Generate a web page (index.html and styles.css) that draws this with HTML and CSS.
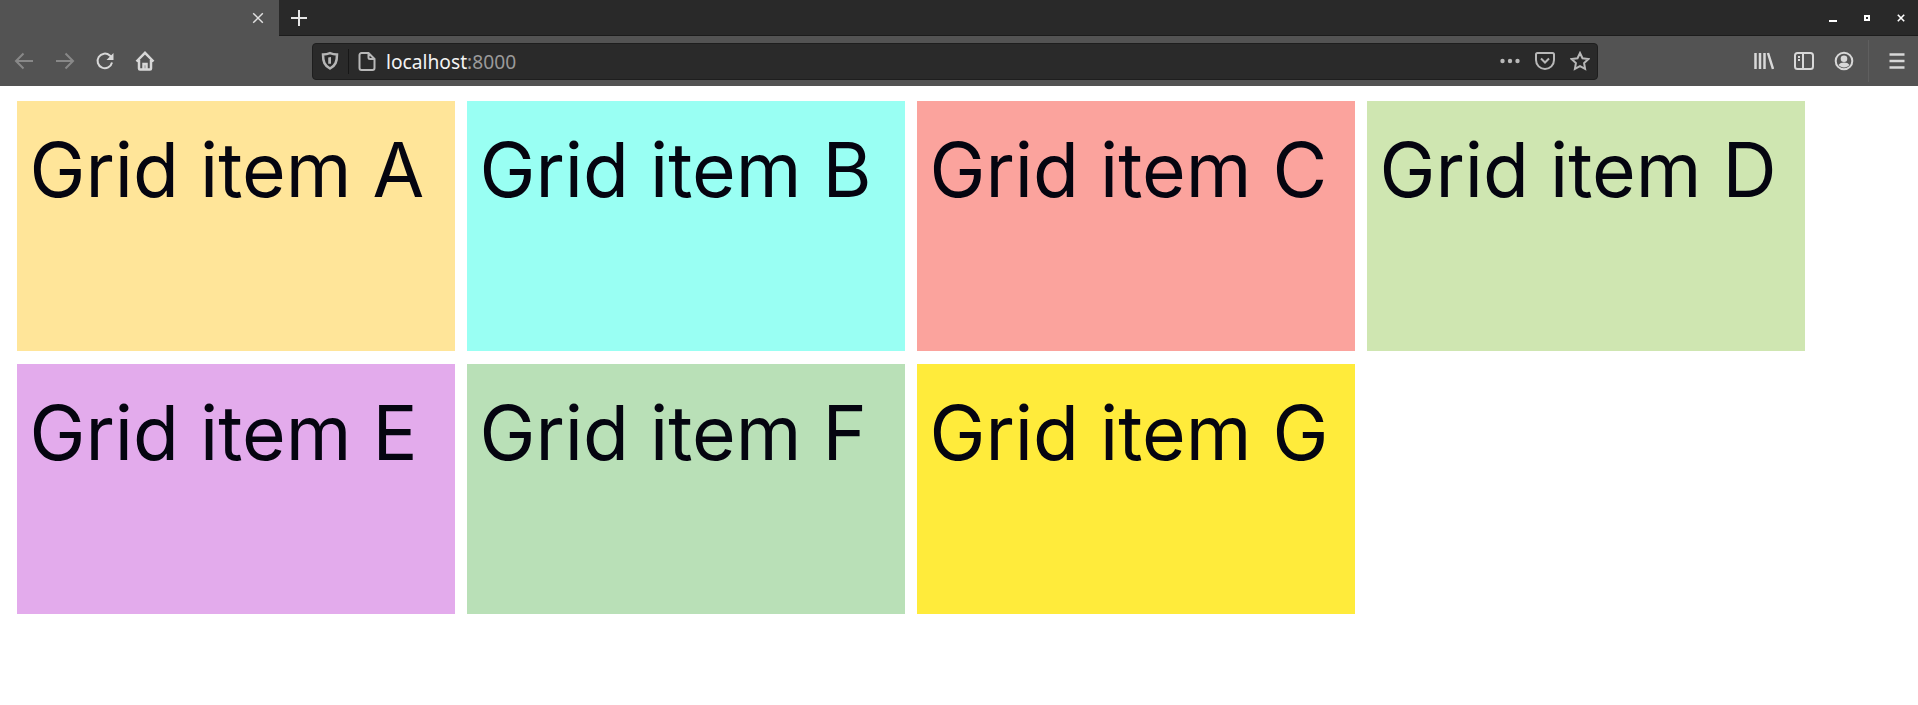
FILE: index.html
```html
<!DOCTYPE html>
<html lang="en">

<head>
    <meta charset="UTF-8">
    <title>Grid items</title>
    <link rel="stylesheet" href="styles.css">
</head>

<body>
    <header class="browser">
        <div class="tabbar">
            <div class="tab">
                <svg class="tab-close" viewBox="0 0 20 20"><path d="M4 4l12 12M16 4L4 16"/></svg>
            </div>
            <svg class="new-tab" viewBox="0 0 20 20"><path d="M10 2v16M2 10h16"/></svg>
            <div class="window-controls">
                <span class="win-min"></span>
                <span class="win-max"></span>
                <svg class="win-close" viewBox="0 0 10 10"><path d="M1 1l8 8M9 1l-8 8"/></svg>
            </div>
        </div>
        <div class="toolbar">
            <div class="nav">
                <svg class="icon dim" viewBox="0 0 20 20"><path d="M19 10H2M9.500 2.500L2 10l7.500 7.500"/></svg>
                <svg class="icon dim" viewBox="0 0 20 20"><path d="M1 10h17M10.500 2.500L18 10l-7.500 7.500"/></svg>
                <svg class="icon" viewBox="0 0 20 20"><path d="M17 11.500A7.300 7.300 0 1 1 14.800 4.500L17 6.500"/><path class="solid" d="M18.500 2v7h-7z"/></svg>
                <svg class="icon bold" viewBox="0 0 20 20"><path d="M1.500 10.500L10 1.800l8.500 8.700M4 9v8.500a1 1 0 0 0 1 1h10a1 1 0 0 0 1-1V9"/><path d="M8.500 18v-5h3v5"/></svg>
            </div>
            <div class="urlbar">
                <svg class="icon shield bold" viewBox="0 0 20 20"><path d="M10 2.200c2.500 1 4.500 1.300 7 1.300 0 7.300-1.500 11-7 14-5.500-3-7-6.700-7-14 2.500 0 4.500-.3 7-1.300z"/><path class="solid thin" d="M8.200 6.500l2.800-.6v6.800H8.200z"/></svg>
                <span class="url-sep"></span>
                <svg class="icon grey" viewBox="0 0 20 20"><path d="M11.500 2H4.500A2 2 0 0 0 2.500 4v13a2 2 0 0 0 2 2h11a2 2 0 0 0 2-2V8zM11.500 2v4.500a1.500 1.500 0 0 0 1.500 1.500h4.500"/></svg>
                <p class="url">localhost<span class="port">:8000</span></p>
                <div class="url-actions">
                    <svg class="icon grey" viewBox="0 0 20 20"><circle class="solid" cx="2.500" cy="10" r="2.200"/><circle class="solid" cx="10" cy="10" r="2.200"/><circle class="solid" cx="17.500" cy="10" r="2.200"/></svg>
                    <svg class="icon grey" viewBox="0 0 20 20"><path d="M2.500 2h15A1.500 1.500 0 0 1 19 3.500V9a9 9 0 0 1-18 0V3.500A1.500 1.500 0 0 1 2.500 2z"/><path d="M6 7.500l4 4 4-4"/></svg>
                    <svg class="icon grey" viewBox="0 0 20 20"><path d="M10 2l2.500 5.300 5.900.8-4.300 4 1 5.800-5.100-2.800-5.100 2.800 1-5.800-4.300-4 5.900-.8z"/></svg>
                </div>
            </div>
            <div class="tools">
                <svg class="icon bold" viewBox="0 0 20 20"><path d="M1.500 2v16M6 2v16M10.500 2v16M14 2l5 16"/></svg>
                <svg class="icon" viewBox="0 0 20 20"><rect x="1" y="2" width="18" height="16" rx="2.500"/><path d="M9 2v16M4 6h2M4 9h2"/></svg>
                <svg class="icon" viewBox="0 0 20 20"><circle cx="10" cy="10" r="8.300"/><circle class="solid" cx="10" cy="7.800" r="3.300"/><path class="solid" d="M4.500 14c1.200-1.700 3-2.500 5.500-2.500s4.300.8 5.500 2.500c-1.400 1.600-3.300 2.400-5.500 2.400S5.900 15.600 4.500 14z"/></svg>
            </div>
            <span class="tool-sep"></span>
            <svg class="icon menu bold" viewBox="0 0 20 20"><path d="M2.500 3.500h15M2.500 10h15M2.500 16.500h15"/></svg>
        </div>
    </header>

    <main class="grid">
        <div class="grid-item item-a">Grid item A</div>
        <div class="grid-item item-b">Grid item B</div>
        <div class="grid-item item-c">Grid item C</div>
        <div class="grid-item item-d">Grid item D</div>
        <div class="grid-item item-e">Grid item E</div>
        <div class="grid-item item-f">Grid item F</div>
        <div class="grid-item item-g">Grid item G</div>
    </main>
</body>

</html>
```

FILE: styles.css
```css
body {
    margin: 0;
    background-color: #fff;
    font-family: Inter, sans-serif;
}

/* browser chrome */
.tabbar {
    display: flex;
    align-items: center;
    height: 35px;
    background-color: #292929;
    border-bottom: 1px solid #1c1c1c;
}
.tab {
    display: flex;
    align-items: center;
    justify-content: flex-end;
    box-sizing: border-box;
    width: 279px;
    height: 36px;
    margin-bottom: -1px;
    padding-right: 13px;
    background-color: #535353;
}
.tab-close {
    width: 16px;
    height: 16px;
    fill: none;
    stroke: #e0e0e0;
    stroke-width: 1.800;
}
.new-tab {
    width: 20px;
    height: 20px;
    margin-left: 10px;
    fill: none;
    stroke: #e6e6e6;
    stroke-width: 2;
}
.window-controls {
    display: flex;
    align-items: center;
    gap: 27px;
    margin-left: auto;
    padding-right: 13px;
}
.win-min {
    width: 8px;
    height: 2px;
    margin-top: 6px;
    background-color: #fff;
}
.win-max {
    box-sizing: border-box;
    width: 6px;
    height: 6px;
    border: 2px solid #fff;
}
.win-close {
    width: 8px;
    height: 8px;
    fill: none;
    stroke: #fff;
    stroke-width: 2;
}

.toolbar {
    display: flex;
    align-items: center;
    height: 50px;
    background-color: #535353;
}
.icon {
    flex: none;
    width: 20px;
    height: 20px;
    fill: none;
    stroke: #d8d8d8;
    stroke-width: 2;
}
.icon.bold {
    stroke-width: 2.500;
}
.icon.dim {
    opacity: .4;
}
.icon.grey {
    stroke: #b8b8b8;
}
.icon .solid {
    fill: currentColor;
    color: #d8d8d8;
    stroke: none;
}
.icon.grey .solid {
    color: #b8b8b8;
}
.nav {
    display: flex;
    gap: 20px;
    padding-left: 14px;
}
.nav .icon:nth-child(2) {
    margin-left: 1px;
}
.urlbar {
    display: flex;
    align-items: center;
    box-sizing: border-box;
    width: 1286px;
    height: 37px;
    margin-left: 157px;
    padding: 0 7px;
    background-color: #2a2a2a;
    border: 1px solid #1e1e1e;
    border-radius: 4px;
}
.shield {
    stroke: #b5b5b5;
}
.shield .thin {
    color: #b5b5b5;
}
.url-sep {
    width: 1px;
    height: 25px;
    margin: 0 8px 0 8px;
    background-color: #171717;
}
.url {
    margin: 0 0 0 9px;
    font: 19.200px "Noto Sans", sans-serif;
    color: #f4f4f4;
}
.port {
    color: #9a9a9a;
}
.url-actions {
    display: flex;
    gap: 15px;
    margin-left: auto;
}
.tools {
    display: flex;
    gap: 20px;
    margin-left: 156px;
}
.tool-sep {
    width: 1px;
    height: 42px;
    margin-left: 14px;
    background-color: #5f5f5f;
}
.menu {
    margin-left: 18px;
}

/* the grid itself */
.grid {
    display: grid;
    grid-template-columns: repeat(4, 438px);
    grid-auto-rows: 250px;
    gap: 13px 12px;
    padding: 15px 17px;
}
.grid-item {
    padding: 13px 12.500px;
    font-size: 75px;
    line-height: 1.500;
    color: #050510;
}
.item-a { background-color: #ffe599; }
.item-b { background-color: #99fff3; }
.item-c { background-color: #fba39d; }
.item-d { background-color: #cfe6b1; }
.item-e { background-color: #e3abec; }
.item-f { background-color: #b9e0b7; }
.item-g { background-color: #ffeb3b; }
```
